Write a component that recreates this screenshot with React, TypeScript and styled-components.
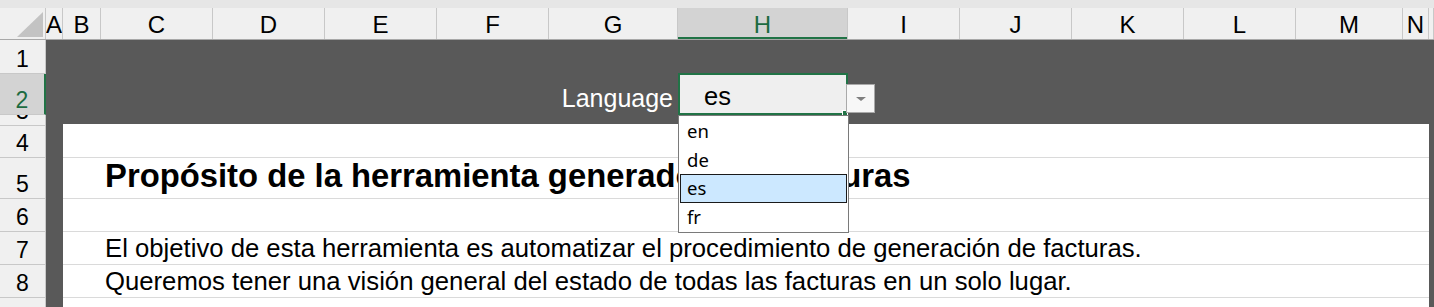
import styled, { createGlobalStyle } from "styled-components";

const GlobalStyle = createGlobalStyle`
    html, body {
        margin: 0;
        padding: 0;
        background: #ffffff;
        overflow: hidden;
    }
    * {
        box-sizing: border-box;
    }
`;

const columns = [
    { label: "A", w: 17 },
    { label: "B", w: 38 },
    { label: "C", w: 112 },
    { label: "D", w: 112 },
    { label: "E", w: 112 },
    { label: "F", w: 112 },
    { label: "G", w: 129 },
    { label: "H", w: 170, active: true },
    { label: "I", w: 112 },
    { label: "J", w: 112 },
    { label: "K", w: 112 },
    { label: "L", w: 112 },
    { label: "M", w: 107 },
    { label: "N", w: 26 },
    { label: "", w: 5 },
];

const rows = [
    { n: 1, h: 34 },
    { n: 2, h: 41, active: true },
    { n: 3, h: 11 },
    { n: 4, h: 32 },
    { n: 5, h: 41 },
    { n: 6, h: 33 },
    { n: 7, h: 33 },
    { n: 8, h: 33 },
    { n: 9, h: 33 },
];

const languages = ["en", "de", "es", "fr"];

export default function App() {
    return (
        <>
            <GlobalStyle />
            <Workbook>
                <TopStrip />
                <ColumnHeaderBar>
                    <Corner>
                        <CornerTriangle />
                    </Corner>
                    {columns.map((col, i) => (
                        <ColumnHeader key={i} $w={col.w} $active={col.active}>
                            {col.label}
                        </ColumnHeader>
                    ))}
                </ColumnHeaderBar>
                <Body>
                    <RowHeaders>
                        {rows.map((row) => (
                            <RowHeader key={row.n} $h={row.h} $active={row.active}>
                                {row.n}
                            </RowHeader>
                        ))}
                    </RowHeaders>
                    <Sheet>
                        <Banner>
                            <BannerRow>
                                <LabelCell>Language</LabelCell>
                                <SelectCell>
                                    es
                                    <FillHandle />
                                    <ArrowButton>
                                        <Caret />
                                    </ArrowButton>
                                    <OptionList>
                                        {languages.map((lang) => (
                                            <Option key={lang} $selected={lang === "es"}>
                                                {lang}
                                            </Option>
                                        ))}
                                    </OptionList>
                                </SelectCell>
                            </BannerRow>
                        </Banner>
                        <Panel>
                            <PanelRow $h={34} />
                            <PanelRow $h={41} $title>
                                Propósito de la herramienta generadora de facturas
                            </PanelRow>
                            <PanelRow $h={33} />
                            <PanelRow $h={33}>
                                El objetivo de esta herramienta es automatizar el procedimiento de generación de facturas.
                            </PanelRow>
                            <PanelRow $h={33}>
                                Queremos tener una visión general del estado de todas las facturas en un solo lugar.
                            </PanelRow>
                            <PanelRow $h={33} />
                        </Panel>
                    </Sheet>
                </Body>
            </Workbook>
        </>
    );
}

const Workbook = styled.div`
    width: 1434px;
    height: 307px;
    overflow: hidden;
    font-family: "Liberation Sans", Arial, sans-serif;
    background: #595959;
`;

const TopStrip = styled.div`
    height: 8px;
    background: #e6e6e6;
`;

const ColumnHeaderBar = styled.div`
    display: flex;
    height: 32px;
    background: #f0f0f0;
    border-bottom: 1px solid #a8a8a8;
`;

const Corner = styled.div`
    width: 46px;
    display: flex;
    align-items: flex-end;
    justify-content: flex-end;
    padding: 0 2px 2px 0;
    border-right: 1px solid #c8c8c8;
`;

const CornerTriangle = styled.div`
    width: 26px;
    height: 25px;
    background: #c3c3c3;
    clip-path: polygon(100% 0, 100% 100%, 0 100%);
`;

const ColumnHeader = styled.div<{ $w: number; $active?: boolean }>`
    width: ${(p) => p.$w}px;
    flex-shrink: 0;
    display: flex;
    align-items: flex-end;
    justify-content: center;
    padding-bottom: 2px;
    font-size: 24px;
    line-height: 1;
    overflow: hidden;
    color: ${(p) => (p.$active ? "#1d6b41" : "#000000")};
    background: ${(p) => (p.$active ? "#d3d3d3" : "transparent")};
    border-right: 1px solid #c8c8c8;
    box-shadow: ${(p) => (p.$active ? "inset 0 -2px 0 #217346" : "none")};
`;

const Body = styled.div`
    display: flex;
    height: 267px;
`;

const RowHeaders = styled.div`
    width: 46px;
    flex-shrink: 0;
    display: flex;
    flex-direction: column;
    background: #f0f0f0;
`;

const RowHeader = styled.div<{ $h: number; $active?: boolean }>`
    height: ${(p) => p.$h}px;
    flex-shrink: 0;
    display: flex;
    align-items: flex-end;
    justify-content: center;
    padding-bottom: 2px;
    font-size: 23px;
    line-height: 1;
    overflow: hidden;
    color: ${(p) => (p.$active ? "#1d6b41" : "#000000")};
    background: ${(p) => (p.$active ? "#d3d3d3" : "#f0f0f0")};
    border-bottom: 1px solid #c8c8c8;
    border-right: ${(p) => (p.$active ? "2px solid #217346" : "1px solid #c8c8c8")};
`;

const Sheet = styled.div`
    flex: 1;
    display: flex;
    flex-direction: column;
    background: #595959;
`;

const Banner = styled.div`
    height: 84px;
    flex-shrink: 0;
    padding-top: 33px;
`;

const BannerRow = styled.div`
    display: flex;
    height: 42px;
`;

const LabelCell = styled.div`
    width: 632px;
    display: flex;
    align-items: flex-end;
    justify-content: flex-end;
    padding: 0 5px 4px 0;
    font-size: 25px;
    line-height: 1;
    color: #ffffff;
`;

const SelectCell = styled.div`
    position: relative;
    width: 170px;
    display: flex;
    align-items: flex-end;
    padding: 0 0 4px 24px;
    font-size: 25.5px;
    line-height: 1;
    color: #000000;
    background: #efefef;
    border: 2px solid #217346;
`;

const FillHandle = styled.span`
    position: absolute;
    right: -2px;
    bottom: -3px;
    width: 6px;
    height: 6px;
    background: #217346;
    border: 1px solid #ffffff;
`;

const ArrowButton = styled.div`
    position: absolute;
    left: calc(100% + 0px);
    top: 9px;
    width: 29px;
    height: 29px;
    display: flex;
    align-items: center;
    justify-content: center;
    background: #f7f7f7;
    border: 1px solid #a9a9a9;
`;

const Caret = styled.span`
    width: 0;
    height: 0;
    border-left: 5px solid transparent;
    border-right: 5px solid transparent;
    border-top: 4px solid #7f7f7f;
`;

const OptionList = styled.div`
    position: absolute;
    left: -2px;
    top: 40px;
    width: 171px;
    height: 118px;
    z-index: 2;
    display: flex;
    flex-direction: column;
    padding: 1px;
    background: #ffffff;
    border: 1px solid #7a7a7a;
`;

const Option = styled.div<{ $selected?: boolean }>`
    height: 29px;
    display: flex;
    align-items: center;
    padding-left: 6px;
    font-family: "Noto Sans", "Open Sans", sans-serif;
    font-size: 18.5px;
    color: #000000;
    background: ${(p) => (p.$selected ? "#cce8ff" : "transparent")};
    border: 1px solid ${(p) => (p.$selected ? "#1a1a1a" : "transparent")};
`;

const Panel = styled.div`
    flex: 1;
    margin: 0 5px 0 17px;
    display: flex;
    flex-direction: column;
    background: #ffffff;
`;

const PanelRow = styled.div<{ $h: number; $title?: boolean }>`
    height: ${(p) => p.$h}px;
    flex-shrink: 0;
    display: flex;
    align-items: flex-end;
    padding: 0 0 ${(p) => (p.$title ? "5px" : "2px")} 42px;
    font-size: ${(p) => (p.$title ? "32.8px" : "25.7px")};
    font-weight: ${(p) => (p.$title ? 700 : 400)};
    line-height: 1;
    white-space: nowrap;
    color: #000000;
    border-bottom: 1px solid #dadada;
`;
